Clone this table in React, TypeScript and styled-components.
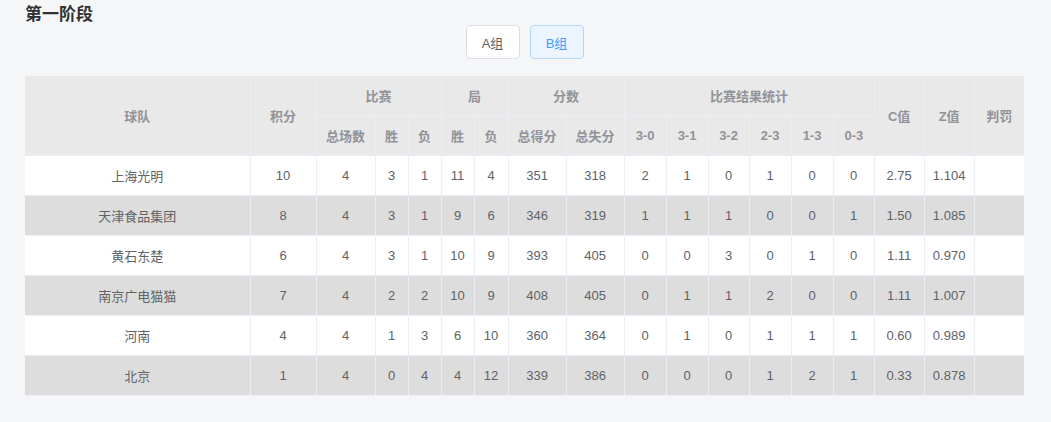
import React from "react";
import styled, { createGlobalStyle } from "styled-components";

const GlobalStyle = createGlobalStyle`
  html, body {
    margin: 0;
    padding: 0;
    background: #f5f6f8;
    font-family: "Liberation Sans", Arial, "Noto Sans CJK SC", sans-serif;
  }
`;

interface TeamRow {
  name: string;
  points: number;
  played: number;
  won: number;
  lost: number;
  setWon: number;
  setLost: number;
  scored: number;
  conceded: number;
  results: number[];
  c: string;
  z: string;
  penalty?: string;
}

const rows: TeamRow[] = [
  { name: "上海光明", points: 10, played: 4, won: 3, lost: 1, setWon: 11, setLost: 4, scored: 351, conceded: 318, results: [2, 1, 0, 1, 0, 0], c: "2.75", z: "1.104" },
  { name: "天津食品集团", points: 8, played: 4, won: 3, lost: 1, setWon: 9, setLost: 6, scored: 346, conceded: 319, results: [1, 1, 1, 0, 0, 1], c: "1.50", z: "1.085" },
  { name: "黄石东楚", points: 6, played: 4, won: 3, lost: 1, setWon: 10, setLost: 9, scored: 393, conceded: 405, results: [0, 0, 3, 0, 1, 0], c: "1.11", z: "0.970" },
  { name: "南京广电猫猫", points: 7, played: 4, won: 2, lost: 2, setWon: 10, setLost: 9, scored: 408, conceded: 405, results: [0, 1, 1, 2, 0, 0], c: "1.11", z: "1.007" },
  { name: "河南", points: 4, played: 4, won: 1, lost: 3, setWon: 6, setLost: 10, scored: 360, conceded: 364, results: [0, 1, 0, 1, 1, 1], c: "0.60", z: "0.989" },
  { name: "北京", points: 1, played: 4, won: 0, lost: 4, setWon: 4, setLost: 12, scored: 339, conceded: 386, results: [0, 0, 0, 1, 2, 1], c: "0.33", z: "0.878" },
];

const colWidths = [225, 66, 59, 33, 33, 33, 34, 58, 58, 42, 42, 41, 42, 42, 41, 50, 50, 50];
const resultLabels = ["3-0", "3-1", "3-2", "2-3", "1-3", "0-3"];

const Page = styled.div`
  padding: 0 25px 0 25px;
  width: 999px;
`;

const Title = styled.h3`
  margin: 0;
  padding-top: 4px;
  height: 21px;
  font-size: 17px;
  font-weight: bold;
  line-height: 21px;
  color: #303133;
`;

const GroupTabs = styled.div`
  display: flex;
  justify-content: center;
  gap: 10px;
  margin-bottom: 17px;
`;

const GroupButton = styled.button<{ $active?: boolean }>`
  width: 54px;
  height: 34px;
  padding: 0;
  font-family: inherit;
  font-size: 13px;
  border-radius: 4px;
  cursor: pointer;
  border: 1px solid ${(p) => (p.$active ? "#b3d8ff" : "#dcdfe6")};
  background: ${(p) => (p.$active ? "#ecf5ff" : "#ffffff")};
  color: ${(p) => (p.$active ? "#409eff" : "#606266")};
`;

const Table = styled.table`
  width: 999px;
  table-layout: fixed;
  border-collapse: collapse;
  font-size: 13px;
  border-bottom: 1px solid #ebeef5;
`;

const HeadCell = styled.th`
  height: 39px;
  padding: 0;
  background: #e9e9e9;
  color: #909399;
  font-weight: bold;
  text-align: center;
  border-right: 1px solid #ebeef5;
  border-bottom: 1px solid #ebeef5;
  &:last-child {
    border-right: none;
  }
`;

const BodyRow = styled.tr<{ $striped: boolean }>`
  background: ${(p) => (p.$striped ? "#dddddd" : "#ffffff")};
`;

const Cell = styled.td`
  height: 39px;
  padding: 0;
  color: #606266;
  text-align: center;
  border-right: 1px solid #ebeef5;
  border-bottom: 1px solid #ebeef5;
  &:last-child {
    border-right: none;
  }
`;

export default function App() {
  return (
    <Page>
      <GlobalStyle />
      <Title>第一阶段</Title>
      <GroupTabs>
        <GroupButton>A组</GroupButton>
        <GroupButton $active>B组</GroupButton>
      </GroupTabs>
      <Table>
        <colgroup>
          {colWidths.map((w, i) => (
            <col key={i} style={{ width: w }} />
          ))}
        </colgroup>
        <thead>
          <tr>
            <HeadCell rowSpan={2}>球队</HeadCell>
            <HeadCell rowSpan={2}>积分</HeadCell>
            <HeadCell colSpan={3}>比赛</HeadCell>
            <HeadCell colSpan={2}>局</HeadCell>
            <HeadCell colSpan={2}>分数</HeadCell>
            <HeadCell colSpan={6}>比赛结果统计</HeadCell>
            <HeadCell rowSpan={2}>C值</HeadCell>
            <HeadCell rowSpan={2}>Z值</HeadCell>
            <HeadCell rowSpan={2}>判罚</HeadCell>
          </tr>
          <tr>
            <HeadCell>总场数</HeadCell>
            <HeadCell>胜</HeadCell>
            <HeadCell>负</HeadCell>
            <HeadCell>胜</HeadCell>
            <HeadCell>负</HeadCell>
            <HeadCell>总得分</HeadCell>
            <HeadCell>总失分</HeadCell>
            {resultLabels.map((l) => (
              <HeadCell key={l}>{l}</HeadCell>
            ))}
          </tr>
        </thead>
        <tbody>
          {rows.map((r, i) => (
            <BodyRow key={r.name} $striped={i % 2 === 1}>
              <Cell>{r.name}</Cell>
              <Cell>{r.points}</Cell>
              <Cell>{r.played}</Cell>
              <Cell>{r.won}</Cell>
              <Cell>{r.lost}</Cell>
              <Cell>{r.setWon}</Cell>
              <Cell>{r.setLost}</Cell>
              <Cell>{r.scored}</Cell>
              <Cell>{r.conceded}</Cell>
              {r.results.map((n, j) => (
                <Cell key={j}>{n}</Cell>
              ))}
              <Cell>{r.c}</Cell>
              <Cell>{r.z}</Cell>
              <Cell>{r.penalty ?? ""}</Cell>
            </BodyRow>
          ))}
        </tbody>
      </Table>
    </Page>
  );
}
